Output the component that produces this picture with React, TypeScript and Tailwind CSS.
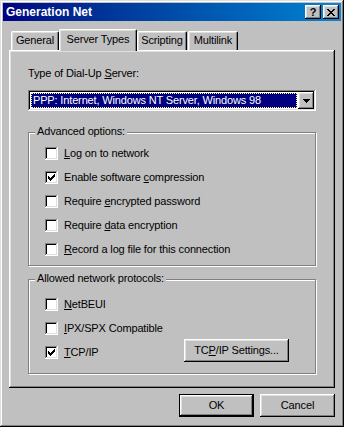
import type { ReactNode } from "react";

const raised =
  "shadow-[inset_-1px_-1px_#000,inset_1px_1px_#fff,inset_-2px_-2px_#808080,inset_2px_2px_#dfdfdf]";
const sunken =
  "shadow-[inset_-1px_-1px_#fff,inset_1px_1px_#808080,inset_-2px_-2px_#dfdfdf,inset_2px_2px_#000]";

function M({ children }: { children: ReactNode }) {
  return <span className="underline underline-offset-[1px]">{children}</span>;
}

function CheckBox({ checked, children }: { checked?: boolean; children: ReactNode }) {
  return (
    <div className="flex h-[13px] items-center gap-[6px]">
      <div className={`relative h-[13px] w-[13px] shrink-0 bg-white ${sunken}`}>
        {checked && (
          <svg
            className="absolute left-[3px] top-[3px]"
            width="7"
            height="7"
            viewBox="0 0 7 7"
            shapeRendering="crispEdges"
          >
            <path
              fill="#000"
              d="M6 0h1v1h-1z M5 1h2v1h-2z M0 2h1v1h-1z M4 2h3v1h-3z M0 3h2v1h-2z M3 3h3v1h-3z M0 4h5v1h-5z M1 5h3v1h-3z M2 6h1v1h-1z"
            />
          </svg>
        )}
      </div>
      <span className="leading-[13px] whitespace-nowrap">{children}</span>
    </div>
  );
}

function GroupBox({
  title,
  className,
  children,
}: {
  title: string;
  className: string;
  children: ReactNode;
}) {
  return (
    <div
      className={`relative border border-[#808080] shadow-[inset_1px_1px_#fff,1px_1px_#fff] ${className}`}
    >
      <span className="absolute -top-[8px] left-[6px] bg-[#c0c0c0] px-[2px] leading-[13px]">
        {title}
      </span>
      {children}
    </div>
  );
}

function Tab({ label, active, className }: { label: string; active?: boolean; className: string }) {
  return (
    <div
      className={`flex items-start justify-center rounded-t-[2px] border-l border-t border-r border-l-white border-t-white border-r-black bg-[#c0c0c0] shadow-[inset_-1px_0_#808080,inset_1px_1px_#dfdfdf] ${
        active ? "relative z-10 -mb-[1px] h-[22px] pt-[3px]" : "h-[19px] pt-[2px]"
      } ${className}`}
    >
      <span className="leading-[13px] whitespace-nowrap">{label}</span>
    </div>
  );
}

function Button({ children, primary, className }: { children: ReactNode; primary?: boolean; className: string }) {
  return (
    <button
      type="button"
      className={`flex h-[23px] items-center justify-center bg-[#c0c0c0] leading-[13px] ${
        primary
          ? "shadow-[inset_0_0_0_1px_#000,inset_-2px_-2px_#000,inset_2px_2px_#fff,inset_-3px_-3px_#808080,inset_3px_3px_#dfdfdf]"
          : raised
      } ${className}`}
    >
      {children}
    </button>
  );
}

export default function App() {
  return (
    <div
      className="flex h-[427px] w-[344px] flex-col bg-[#c0c0c0] p-[3px] font-['Liberation_Sans',Arial,sans-serif] text-[11px] tracking-[-0.15px] text-black shadow-[inset_-1px_-1px_#000,inset_1px_1px_#dfdfdf,inset_-2px_-2px_#808080,inset_2px_2px_#fff]"
    >
      {/* title bar */}
      <div className="flex h-[18px] items-center justify-between bg-linear-to-r from-[#000080] to-[#1084d0] pl-[3px] pr-[2px]">
        <span className="text-[12px] font-bold leading-[14px] tracking-normal text-white">Generation Net</span>
        <div className="flex gap-[2px]">
          <div className={`flex h-[14px] w-[16px] items-center justify-center bg-[#c0c0c0] ${raised}`}>
            <span className="text-[11px] font-bold leading-[11px]">?</span>
          </div>
          <div className={`flex h-[14px] w-[16px] items-center justify-center bg-[#c0c0c0] ${raised}`}>
            <svg width="8" height="7" viewBox="0 0 8 7" shapeRendering="crispEdges">
              <path
                fill="#000"
                d="M0 0h2v1h-2z M6 0h2v1h-2z M1 1h2v1h-2z M5 1h2v1h-2z M2 2h4v1h-4z M3 3h2v1h-2z M2 4h4v1h-4z M1 5h2v1h-2z M5 5h2v1h-2z M0 6h2v1h-2z M6 6h2v1h-2z"
              />
            </svg>
          </div>
        </div>
      </div>

      <div className="mt-[8px] px-[6px]">
        {/* tabs */}
        <div className="flex h-[21px] items-end pl-[2px]">
          <Tab label="General" className="w-[48px]" />
          <Tab label="Server Types" active className="w-[78px]" />
          <Tab label="Scripting" className="w-[50px]" />
          <Tab label="Multilink" className="ml-[1px] w-[50px]" />
        </div>

        {/* tab page */}
        <div className={`h-[338px] px-[19px] pt-[17px] ${raised}`}>
          <div className="leading-[13px]">
            Type of Dial-Up <M>S</M>erver:
          </div>

          <div className={`mt-[10px] flex h-[21px] bg-white p-[2px] ${sunken}`}>
            <div className="flex-1 p-[1px]">
              <div className="flex h-full items-center border border-dotted border-[#ffff80] bg-[#000080] pl-[1px] leading-[13px] text-white whitespace-nowrap">
                PPP: Internet, Windows NT Server, Windows 98
              </div>
            </div>
            <div className={`flex h-[17px] w-[16px] items-center justify-center bg-[#c0c0c0] ${raised}`}>
              <svg width="7" height="4" viewBox="0 0 7 4" shapeRendering="crispEdges">
                <path fill="#000" d="M0 0h7v1h-7z M1 1h5v1h-5z M2 2h3v1h-3z M3 3h1v1h-1z" />
              </svg>
            </div>
          </div>

          <GroupBox title="Advanced options:" className="mt-[21px] pb-[9px] pl-[16px] pt-[14px]">
            <div className="flex flex-col gap-[11px]">
              <CheckBox>
                <M>L</M>og on to network
              </CheckBox>
              <CheckBox checked>
                Enable software <M>c</M>ompression
              </CheckBox>
              <CheckBox>
                Require <M>e</M>ncrypted password
              </CheckBox>
              <CheckBox>
                Require <M>d</M>ata encryption
              </CheckBox>
              <CheckBox>
                <M>R</M>ecord a log file for this connection
              </CheckBox>
            </div>
          </GroupBox>

          <GroupBox title="Allowed network protocols:" className="mt-[13px] pb-[11px] pl-[16px] pt-[18px]">
            <div className="flex flex-col">
              <CheckBox>
                <M>N</M>etBEUI
              </CheckBox>
              <div className="mt-[11px]">
                <CheckBox>
                  <M>I</M>PX/SPX Compatible
                </CheckBox>
              </div>
              <div className="mt-[4px] flex items-end">
                <div className="mb-[3px]">
                  <CheckBox checked>
                    <M>T</M>CP/IP
                  </CheckBox>
                </div>
                <Button className="ml-auto mr-[26px] w-[105px]">
                  TC<M>P</M>/IP Settings...
                </Button>
              </div>
            </div>
          </GroupBox>
        </div>
      </div>

      {/* dialog buttons */}
      <div className="mt-[6px] flex justify-end gap-[6px] pr-[6px]">
        <Button primary className="w-[75px]">
          OK
        </Button>
        <Button className="w-[75px]">Cancel</Button>
      </div>
    </div>
  );
}
